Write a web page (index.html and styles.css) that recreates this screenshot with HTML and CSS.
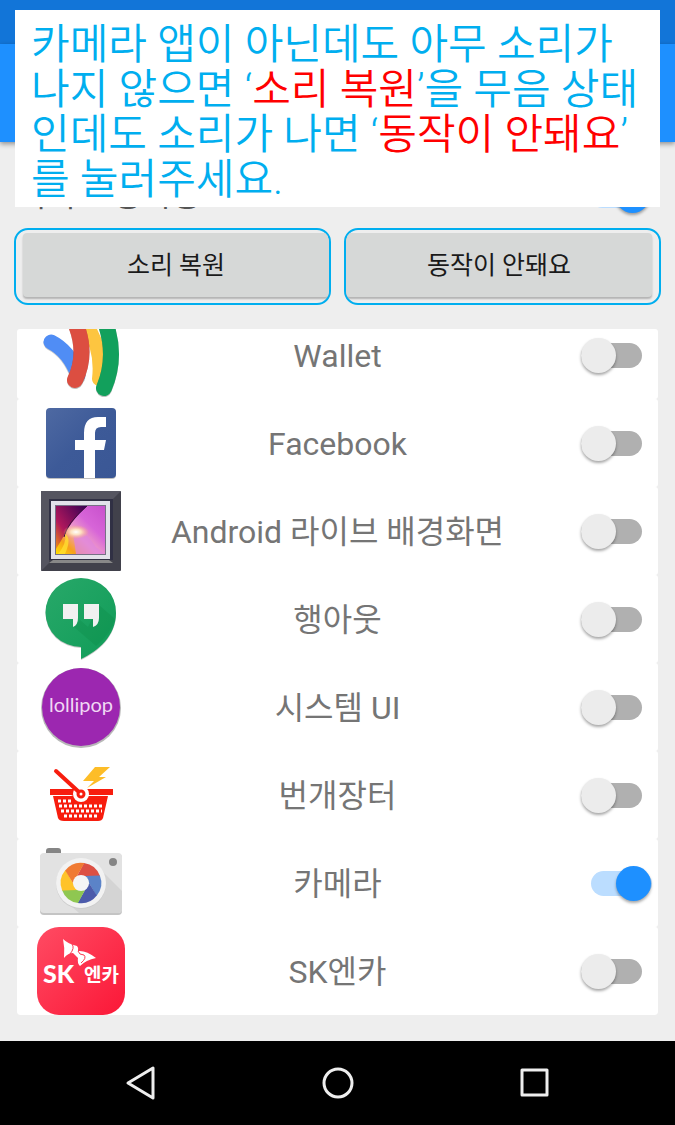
FILE: index.html
```
<!DOCTYPE html>
<html lang="ko">
<head>
  <meta charset="UTF-8">
  <meta name="viewport" content="width=device-width, initial-scale=1">
  <title>무음 카메라</title>
  <link rel="stylesheet" href="styles.css">
</head>
<body>
  <!-- Header -->
  <div class="status-bar"></div>
  <header class="app-bar"></header>

  <main class="content">
    <div class="service-row">
      <label for="service">서비스 동작중</label>
      <input type="checkbox" class="switch" id="service" checked>
    </div>

    <div class="actions">
      <div class="action"><button type="button" class="restore-btn">소리 복원</button></div>
      <div class="action"><button type="button" class="report-btn">동작이 안돼요</button></div>
    </div>

    <!-- App list -->
    <ul class="app-list">
      <li class="app-row first">
        <svg class="app-icon" viewBox="0 0 88 88" aria-hidden="true">
          <g fill="none" stroke-linecap="round">
            <path d="M14 32Q32 41 41 66" stroke="#000" stroke-opacity=".2" stroke-width="15"/>
            <path d="M14 31Q32 40 41 64" stroke="#508df5" stroke-width="15"/>
            <path d="M45 8Q66 34 62 68" stroke="#fdc540" stroke-width="14"/>
            <path d="M36 7Q52 40 38 70" stroke="#000" stroke-opacity=".25" stroke-width="16"/>
            <path d="M36 7Q52 40 38 69" stroke="#dc4e41" stroke-width="16"/>
            <path d="M67 8Q81 44 67 78" stroke="#000" stroke-opacity=".25" stroke-width="16"/>
            <path d="M67 8Q81 44 67 77" stroke="#12a05c" stroke-width="16"/>
          </g>
        </svg>
        <label for="wallet">Wallet</label>
        <input type="checkbox" class="switch" id="wallet">
      </li>
      <li class="app-row">
        <svg class="app-icon" viewBox="0 0 88 88" aria-hidden="true">
          <defs>
            <linearGradient id="fb" x1="0" y1="0" x2="1" y2="1">
              <stop offset="0" stop-color="#4e69a2"/>
              <stop offset=".5" stop-color="#3d5a98"/>
              <stop offset="1" stop-color="#3a5795"/>
            </linearGradient>
          </defs>
          <rect x="9" y="10" width="70" height="70" rx="4" fill="#000" opacity=".25"/>
          <rect x="9" y="9" width="70" height="70" rx="4" fill="url(#fb)"/>
          <path d="M47 79V51H38V41H47V34Q47 18 61 18H69V28H64Q58 28 58 34V41H69L67 51H58V79Z" fill="#fff"/>
        </svg>
        <label for="facebook">Facebook</label>
        <input type="checkbox" class="switch" id="facebook">
      </li>
      <li class="app-row">
        <svg class="app-icon" viewBox="0 0 88 88" aria-hidden="true">
          <defs>
            <linearGradient id="wall" x1="0" y1="1" x2="1" y2="0">
              <stop offset="0" stop-color="#ffe000"/>
              <stop offset=".2" stop-color="#f6a01c"/>
              <stop offset=".42" stop-color="#f0a0c8"/>
              <stop offset=".65" stop-color="#d765d8"/>
              <stop offset="1" stop-color="#c850cc"/>
            </linearGradient>
            <linearGradient id="dusk" x1="0" y1="1" x2="1" y2="0">
              <stop offset="0" stop-color="#f09010"/>
              <stop offset=".35" stop-color="#b0185c"/>
              <stop offset="1" stop-color="#350055"/>
            </linearGradient>
            <radialGradient id="sun">
              <stop offset="0" stop-color="#fff"/>
              <stop offset=".4" stop-color="#ffe9c0" stop-opacity=".9"/>
              <stop offset="1" stop-color="#ffb070" stop-opacity="0"/>
            </radialGradient>
          </defs>
          <rect x="4" y="4" width="80" height="80" rx="1" fill="#41414b"/>
          <path d="M4 4H84L76 12H12V76L4 84Z" fill="#555560"/>
          <path d="M12 76H76L72 73H16Z" fill="#888"/>
          <path d="M12 12H76V73H12Z" fill="#303044"/>
          <rect x="14" y="14" width="59" height="58" fill="#e2e2ea"/>
          <rect x="18" y="18" width="51" height="50" fill="#777086"/>
          <rect x="19" y="19" width="49" height="48" fill="url(#wall)"/>
          <path d="M19 19H50Q35 33 29 45Q24 54 19 62Z" fill="url(#dusk)"/>
          <path d="M50 19Q30 36 27 50" fill="none" stroke="#3a1040" stroke-width="1"/>
          <path d="M36 46Q47 41 59 60L68 67H39Z" fill="#df85dc" opacity=".75"/>
          <path d="M28 47Q35 51 28 67H21Q30 56 28 47Z" fill="#ffdf30" opacity=".8"/>
          <ellipse cx="39" cy="45" rx="13" ry="7" fill="url(#sun)"/>
        </svg>
        <label for="wallpaper">Android 라이브 배경화면</label>
        <input type="checkbox" class="switch" id="wallpaper">
      </li>
      <li class="app-row">
        <svg class="app-icon" viewBox="0 0 88 88" aria-hidden="true">
          <defs>
            <linearGradient id="talk" x1="0" y1="0" x2="1" y2="1">
              <stop offset="0" stop-color="#28a869"/>
              <stop offset="1" stop-color="#109c58"/>
            </linearGradient>
          </defs>
          <path d="M44 4A35 34 0 0 1 79 39C79 62 61 77 44 85V73A35 34 0 0 1 44 4Z" fill="#000" opacity=".22"/>
          <path d="M44 3A35 34 0 0 1 79 38C79 61 61 76 44 84V72A35 34 0 0 1 44 3Z" fill="url(#talk)"/>
          <path d="M62 30L78 44Q74 59 59 71L37 52L43 45L51 52Z" fill="#07823f" opacity=".25"/>
          <path d="M26 29H41V43Q41 50 36 52V44H26ZM47 29H62V43Q62 50 56 52V44H47Z" fill="#f1f1f1"/>
        </svg>
        <label for="hangouts">행아웃</label>
        <input type="checkbox" class="switch" id="hangouts">
      </li>
      <li class="app-row">
        <svg class="app-icon" viewBox="0 0 88 88" aria-hidden="true">
          <circle cx="44" cy="45" r="40" fill="#000" opacity=".28"/>
          <circle cx="44" cy="44" r="39" fill="#9c27b0"/>
          <text x="44" y="49" class="lollipop-text">lollipop</text>
        </svg>
        <label for="systemui">시스템 UI</label>
        <input type="checkbox" class="switch" id="systemui">
      </li>
      <li class="app-row">
        <svg class="app-icon" viewBox="0 0 88 88" aria-hidden="true">
          <path d="M58 16H73L62 26H69L50 37L57 30H46Z" fill="#fdbd28"/>
          <path d="M16 45H71L66 67Q65 70 61 70H27Q22 70 21 67Z" fill="#f71d0e"/>
          <path d="M13 38H76V44H51L44 48L34 44H13Z" fill="#f71d0e"/>
          <circle cx="44" cy="43" r="8" fill="#fff"/>
          <path d="M19 20L43 42" fill="none" stroke="#f71d0e" stroke-width="4" stroke-linecap="round"/>
          <circle cx="44" cy="43" r="3" fill="#fff" stroke="#f71d0e" stroke-width="3"/>
          <path d="M21 50H34M22 55H67M24 60H65M27 65H62" stroke="#fff" stroke-width="3" stroke-dasharray="3 2"/>
        </svg>
        <label for="bunjang">번개장터</label>
        <input type="checkbox" class="switch" id="bunjang">
      </li>
      <li class="app-row">
        <svg class="app-icon" viewBox="0 0 88 88" aria-hidden="true">
          <rect x="9" y="9" width="15" height="10" rx="3" fill="#858585"/>
          <rect x="3" y="15" width="82" height="61" rx="4" fill="#c4c4c4"/>
          <rect x="3" y="14" width="82" height="60" rx="4" fill="#e2e2e2"/>
          <path d="M61 28L85 52V70Q85 74 81 74H42L27 61Z" fill="#d4d4d4"/>
          <circle cx="76" cy="23" r="4" fill="#858585"/>
          <circle cx="44" cy="45" r="25" fill="#ccc"/>
          <circle cx="44" cy="44" r="25" fill="#f2f2f2"/>
          <g transform="translate(44 44)">
            <path d="M-4 -7L3 -20A20 20 0 0 1 19 -7Z" fill="#dc5044"/>
            <path d="M-4 -7L3 -20A20 20 0 0 1 19 -7Z" transform="rotate(60)" fill="#5b83c8"/>
            <path d="M-4 -7L3 -20A20 20 0 0 1 19 -7Z" transform="rotate(120)" fill="#4c5bab"/>
            <path d="M-4 -7L3 -20A20 20 0 0 1 19 -7Z" transform="rotate(180)" fill="#8fc751"/>
            <path d="M-4 -7L3 -20A20 20 0 0 1 19 -7Z" transform="rotate(240)" fill="#ffc329"/>
            <path d="M-4 -7L3 -20A20 20 0 0 1 19 -7Z" transform="rotate(300)" fill="#f07a32"/>
            <circle r="8" fill="#f5f5f5"/>
          </g>
        </svg>
        <label for="camera">카메라</label>
        <input type="checkbox" class="switch" id="camera" checked>
      </li>
      <li class="app-row">
        <svg class="app-icon" viewBox="0 0 88 88" aria-hidden="true">
          <defs>
            <linearGradient id="sk" x1="0" y1="0" x2="1" y2="1">
              <stop offset="0" stop-color="#ff4b63"/>
              <stop offset="1" stop-color="#fb1737"/>
            </linearGradient>
          </defs>
          <rect width="88" height="88" rx="22" fill="url(#sk)"/>
          <path d="M26 12Q31 17 40 19Q42 21 41 24Q49 23 59 31Q49 33 43 39Q40 36 41 31Q38 28 36 26Q31 26 27 31Q28 21 26 12Z" fill="#fff"/>
          <path d="M35 17Q38 21 33 27M41 24Q42 28 47 28Q50 31 44 36" fill="none" stroke="#fb3950" stroke-width="1"/>
          <text x="6" y="56" class="sk-text">SK</text>
          <text x="47" y="55" class="encar-text">엔카</text>
        </svg>
        <label for="encar">SK엔카</label>
        <input type="checkbox" class="switch" id="encar">
      </li>
    </ul>
  </main>

  <!-- Android navigation -->
  <nav class="nav-bar">
    <button type="button" aria-label="뒤로">
      <svg viewBox="0 0 40 40"><path d="M7 20L32 5V35Z"/></svg>
    </button>
    <button type="button" aria-label="홈">
      <svg viewBox="0 0 40 40"><circle cx="20" cy="20" r="14"/></svg>
    </button>
    <button type="button" aria-label="최근 앱">
      <svg viewBox="0 0 40 40"><rect x="7" y="7" width="25" height="25"/></svg>
    </button>
  </nav>

  <!-- Help message over the screen -->
  <p class="notice">카메라 앱이 아닌데도 아무 소리가 나지 않으면 ‘<em>소리 복원</em>’을 무음 상태인데도 소리가 나면 ‘<em>동작이 안돼요</em>’<wbr>를 눌러주세요.</p>
</body>
</html>
```

FILE: styles.css
```
* {
  box-sizing: border-box;
}

body {
  position: relative;
  display: flex;
  flex-direction: column;
  min-height: 100vh;
  margin: 0;
  background-color: #eee;
  font-family: Roboto, "Noto Sans CJK KR", sans-serif;
}

.status-bar {
  height: 44px;
  background-color: #1275d8;
}

.app-bar {
  height: 98px;
  background-color: #1e90ff;
  box-shadow: 0 2px 5px rgba(0, 0, 0, 0.4);
}

.content {
  flex: 1;
  padding: 28px 14px 26px;
}

.service-row {
  display: flex;
  align-items: center;
  justify-content: space-between;
  height: 50px;
  padding: 0 9px 0 3px;
  color: #555;
  font-size: 32px;
  line-height: 40px;
}

/* Buttons */
.actions {
  display: grid;
  grid-template-columns: 1fr 1fr;
  gap: 13px;
  margin-top: 8px;
}

.action {
  display: flex;
  height: 77px;
  padding: 3px 0 6px 7px;
  border: 2px solid #00aeef;
  border-radius: 14px;
  overflow: hidden;
}

.action:last-child {
  padding: 3px 7px 6px 0;
}

.action button {
  flex: 1;
  padding: 2px 6px 0;
  border: none;
  border-radius: 4px;
  background-color: #d6d8d7;
  box-shadow: 0 2px 2px rgba(0, 0, 0, 0.25);
  color: #1a1a1a;
  font-family: inherit;
  font-size: 25px;
  line-height: 30px;
}

/* App list */
.app-list {
  margin: 24px 3px 0;
  padding: 0;
  list-style: none;
  border-radius: 3px;
  overflow: hidden;
}

.app-row {
  display: grid;
  grid-template-columns: 88px 1fr 88px;
  align-items: center;
  height: 88px;
  padding: 0 20px;
  background-color: #fff;
  border-radius: 3px;
  color: #757575;
  font-size: 32px;
  line-height: 40px;
  text-align: center;
}

.app-row label {
  padding-top: 2px;
}

/* scrolled partly out of view */
.app-row.first {
  margin-top: -18px;
}

.app-icon {
  display: block;
  width: 88px;
  height: 88px;
}

.lollipop-text {
  fill: #f0d8f4;
  font-family: Lato, sans-serif;
  font-size: 20px;
  text-anchor: middle;
}

.sk-text {
  fill: #fff;
  font-family: Lato, sans-serif;
  font-size: 25px;
  font-weight: 900;
}

.encar-text {
  fill: #fff;
  font-family: "Noto Sans CJK KR", sans-serif;
  font-size: 19px;
  font-weight: bold;
}

/* Switch */
.switch {
  appearance: none;
  display: flex;
  align-items: center;
  width: 72px;
  height: 36px;
  margin: 0;
  cursor: pointer;
}

.app-row .switch {
  justify-self: end;
  margin-right: -15px;
}

.switch::before {
  content: "";
  width: 61px;
  height: 25px;
  border-radius: 13px;
  background-color: #b0b0b0;
}

.switch::after {
  content: "";
  flex: none;
  width: 35px;
  height: 35px;
  margin-left: -61px;
  border-radius: 50%;
  background-color: #ececec;
  box-shadow: 0 2px 3px rgba(0, 0, 0, 0.35);
}

.switch:checked::before {
  margin-left: 10px;
  background-color: #bbddff;
}

.switch:checked::after {
  margin-left: -36px;
  background-color: #1e90ff;
}

/* Navigation */
.nav-bar {
  display: flex;
  justify-content: center;
  align-items: center;
  gap: 157px;
  height: 85px;
  padding-bottom: 2px;
  background-color: #000;
}

.nav-bar button {
  width: 40px;
  height: 40px;
  padding: 0;
  border: none;
  background: none;
}

.nav-bar svg {
  display: block;
  fill: none;
  stroke: #eee;
  stroke-width: 3;
  stroke-linejoin: round;
}

/* Help message */
.notice {
  position: absolute;
  top: 10px;
  left: 15px;
  right: 15px;
  margin: 0;
  padding: 12px 16px 5px;
  background-color: #fff;
  color: #00aeef;
  font-size: 42px;
  font-weight: 350;
  line-height: 45px;
  word-break: break-all;
}

.notice em {
  color: #f00;
  font-style: normal;
}
```
